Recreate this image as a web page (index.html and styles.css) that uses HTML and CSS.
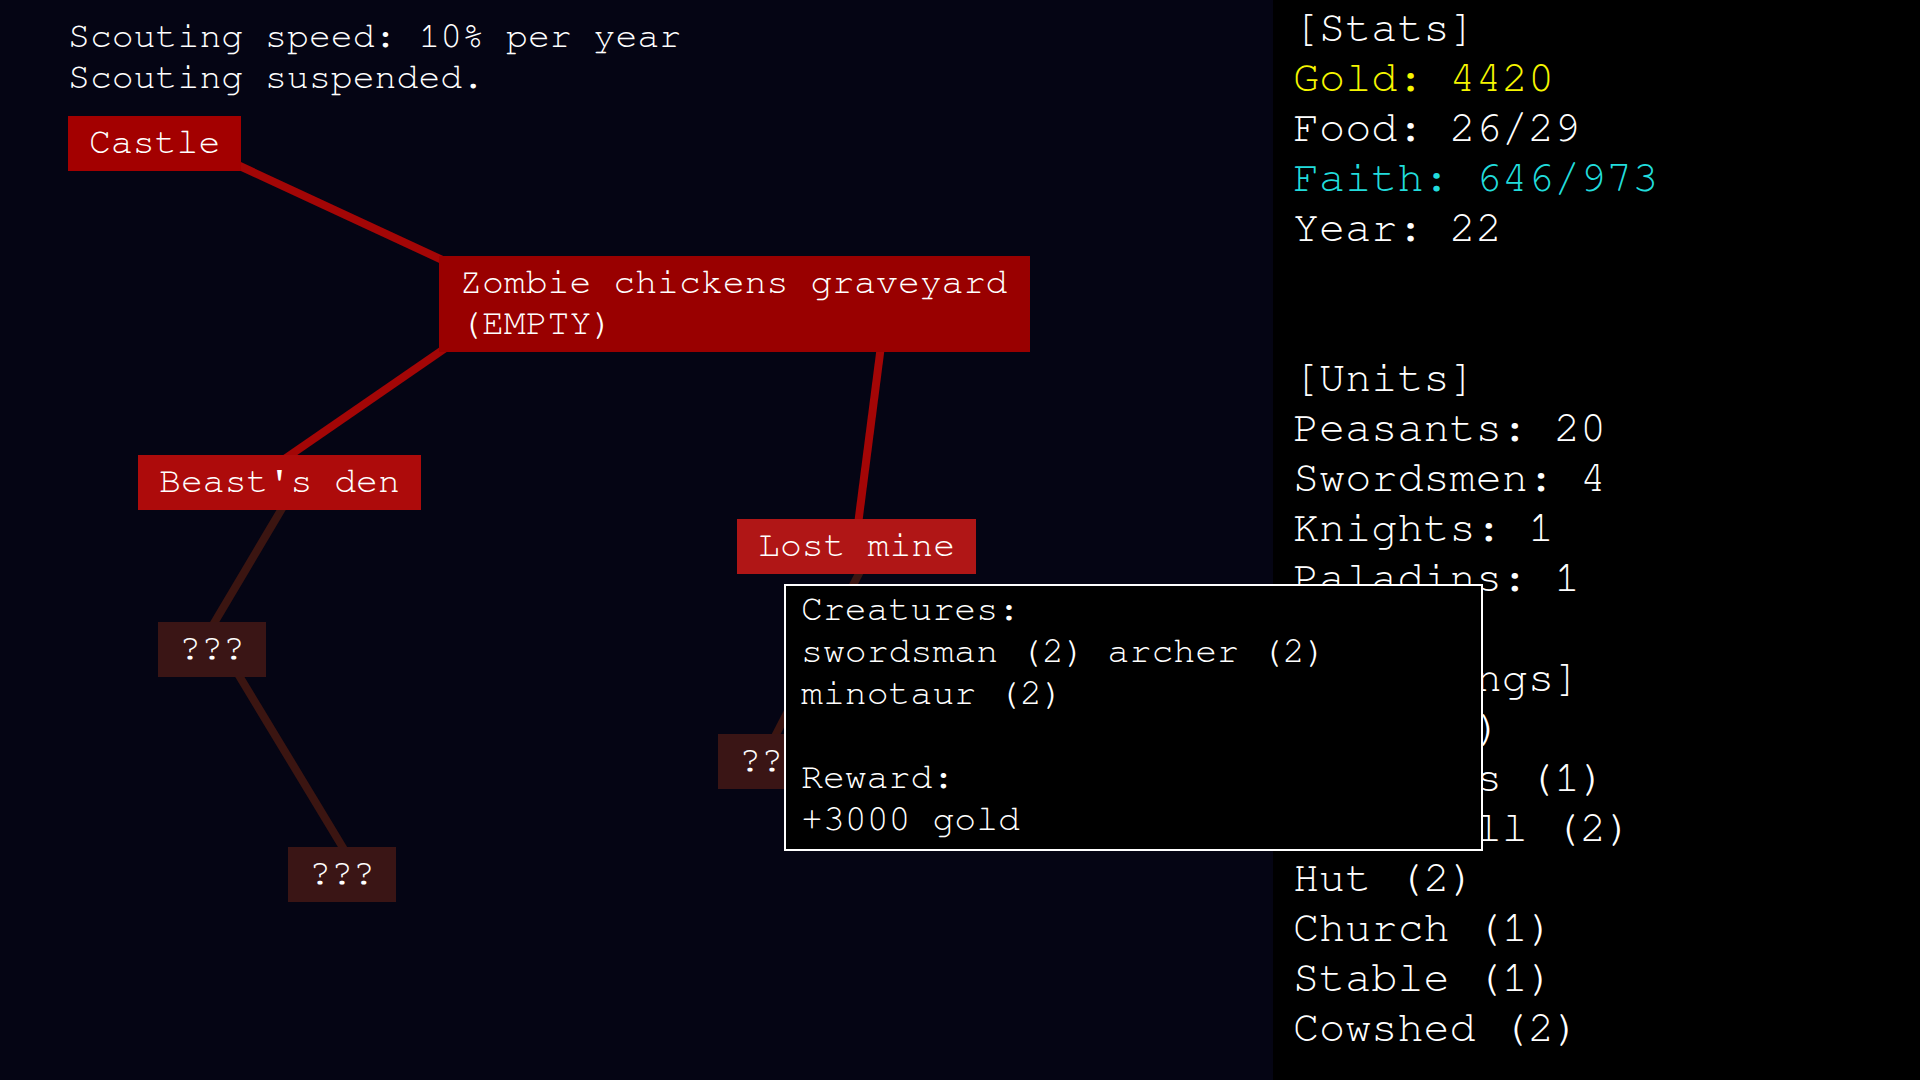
FILE: index.html
```html
<!DOCTYPE html>
<html lang="en">
<head>
<meta charset="utf-8">
<title>Scouting</title>
<link rel="stylesheet" href="styles.css">
</head>
<body>
<div class="app">
  <main class="map">
    <div class="status">
      <div>Scouting speed: 10% per year</div>
      <div>Scouting suspended.</div>
    </div>
    <svg class="links" width="1273" height="1080" viewBox="0 0 1273 1080">
      <g class="link-known">
        <line x1="215" y1="154.5" x2="465" y2="270.5"/>
        <line x1="460" y1="338" x2="270" y2="469"/>
        <line x1="883" y1="330" x2="856" y2="540"/>
      </g>
      <g class="link-unknown">
        <line x1="290" y1="495" x2="204" y2="640"/>
        <line x1="232" y1="664" x2="351" y2="861"/>
        <line x1="866" y1="560" x2="770" y2="746"/>
      </g>
    </svg>
    <div class="node known n-castle">Castle</div>
    <div class="node known n-zombie">Zombie chickens graveyard<br>(EMPTY)</div>
    <div class="node known n-beast">Beast's den</div>
    <div class="node known n-mine">Lost mine</div>
    <div class="node unknown n-u1">???</div>
    <div class="node unknown n-u2">???</div>
    <div class="node unknown n-u3">???</div>
  </main>
  <aside class="sidebar">
    <section class="block">
      <div>[Stats]</div>
      <div class="gold">Gold: 4420</div>
      <div>Food: 26/29</div>
      <div class="faith">Faith: 646/973</div>
      <div>Year: 22</div>
    </section>
    <section class="block gap2">
      <div>[Units]</div>
      <div>Peasants: 20</div>
      <div>Swordsmen: 4</div>
      <div>Knights: 1</div>
      <div>Paladins: 1</div>
    </section>
    <section class="block gap1">
      <div>[Buildings]</div>
      <div>Farm (2)</div>
      <div>Barracks (1)</div>
      <div>Watermill (2)</div>
      <div>Hut (2)</div>
      <div>Church (1)</div>
      <div>Stable (1)</div>
      <div>Cowshed (2)</div>
    </section>
  </aside>
  <div class="tooltip">
    <div>Creatures:</div>
    <div>swordsman (2) archer (2)</div>
    <div>minotaur (2)</div>
    <div class="blank"></div>
    <div>Reward:</div>
    <div>+3000 gold</div>
  </div>
</div>
</body>
</html>
```
FILE: styles.css
```css
* { box-sizing: border-box; }

html, body {
  margin: 0;
  padding: 0;
  background: #050514;
}

body {
  font-family: "Nimbus Mono PS", "Nimbus Mono L", "FreeMono", "Courier New", "Liberation Mono", monospace;
  color: #ffffff;
}

.app {
  position: relative;
  display: flex;
  width: 1920px;
  height: 1080px;
  overflow: hidden;
}

.map {
  position: relative;
  flex: 0 0 1273px;
  height: 1080px;
  background: #050514;
}

.status {
  padding: 16px 0 0 68px;
  font-size: 36.5px;
  line-height: 41px;
  white-space: nowrap;
}

.links {
  position: absolute;
  left: 0;
  top: 0;
}

.link-known line {
  stroke: #a30606;
  stroke-width: 8;
}

.link-unknown line {
  stroke: #3b1511;
  stroke-width: 8;
}

.node {
  position: absolute;
  padding: 6px 21px 8px;
  font-size: 36.5px;
  line-height: 41px;
  white-space: nowrap;
  color: #ffffff;
}

.known { background: #a00000; }
.unknown { background: #3a1515; }

.n-castle { left: 68px; top: 116px; background: #a30000; }
.n-zombie { left: 439px; top: 256px; width: 591px; padding-left: 21px; background: #990000; }
.n-beast { left: 138px; top: 455px; background: #ad0b0b; }
.n-mine { left: 737px; top: 519px; background: #b01616; }
.n-u1 { left: 158px; top: 622px; }
.n-u2 { left: 288px; top: 847px; }
.n-u3 { left: 718px; top: 734px; }

.sidebar {
  flex: 1 1 auto;
  height: 1080px;
  background: #000000;
  padding: 3px 0 0 20px;
  font-size: 43.5px;
  line-height: 50px;
  white-space: nowrap;
}

.gap2 { margin-top: 100px; }
.gap1 { margin-top: 50px; }

.gold { color: #f6f600; }
.faith { color: #22dcdc; }

.tooltip {
  position: absolute;
  left: 784px;
  top: 584px;
  width: 699px;
  height: 267px;
  background: #000000;
  border: 2px solid #ffffff;
  padding: 2px 13px 0 15px;
  font-size: 36.5px;
  line-height: 42px;
  white-space: nowrap;
  z-index: 5;
}

.blank { height: 42px; }
```
